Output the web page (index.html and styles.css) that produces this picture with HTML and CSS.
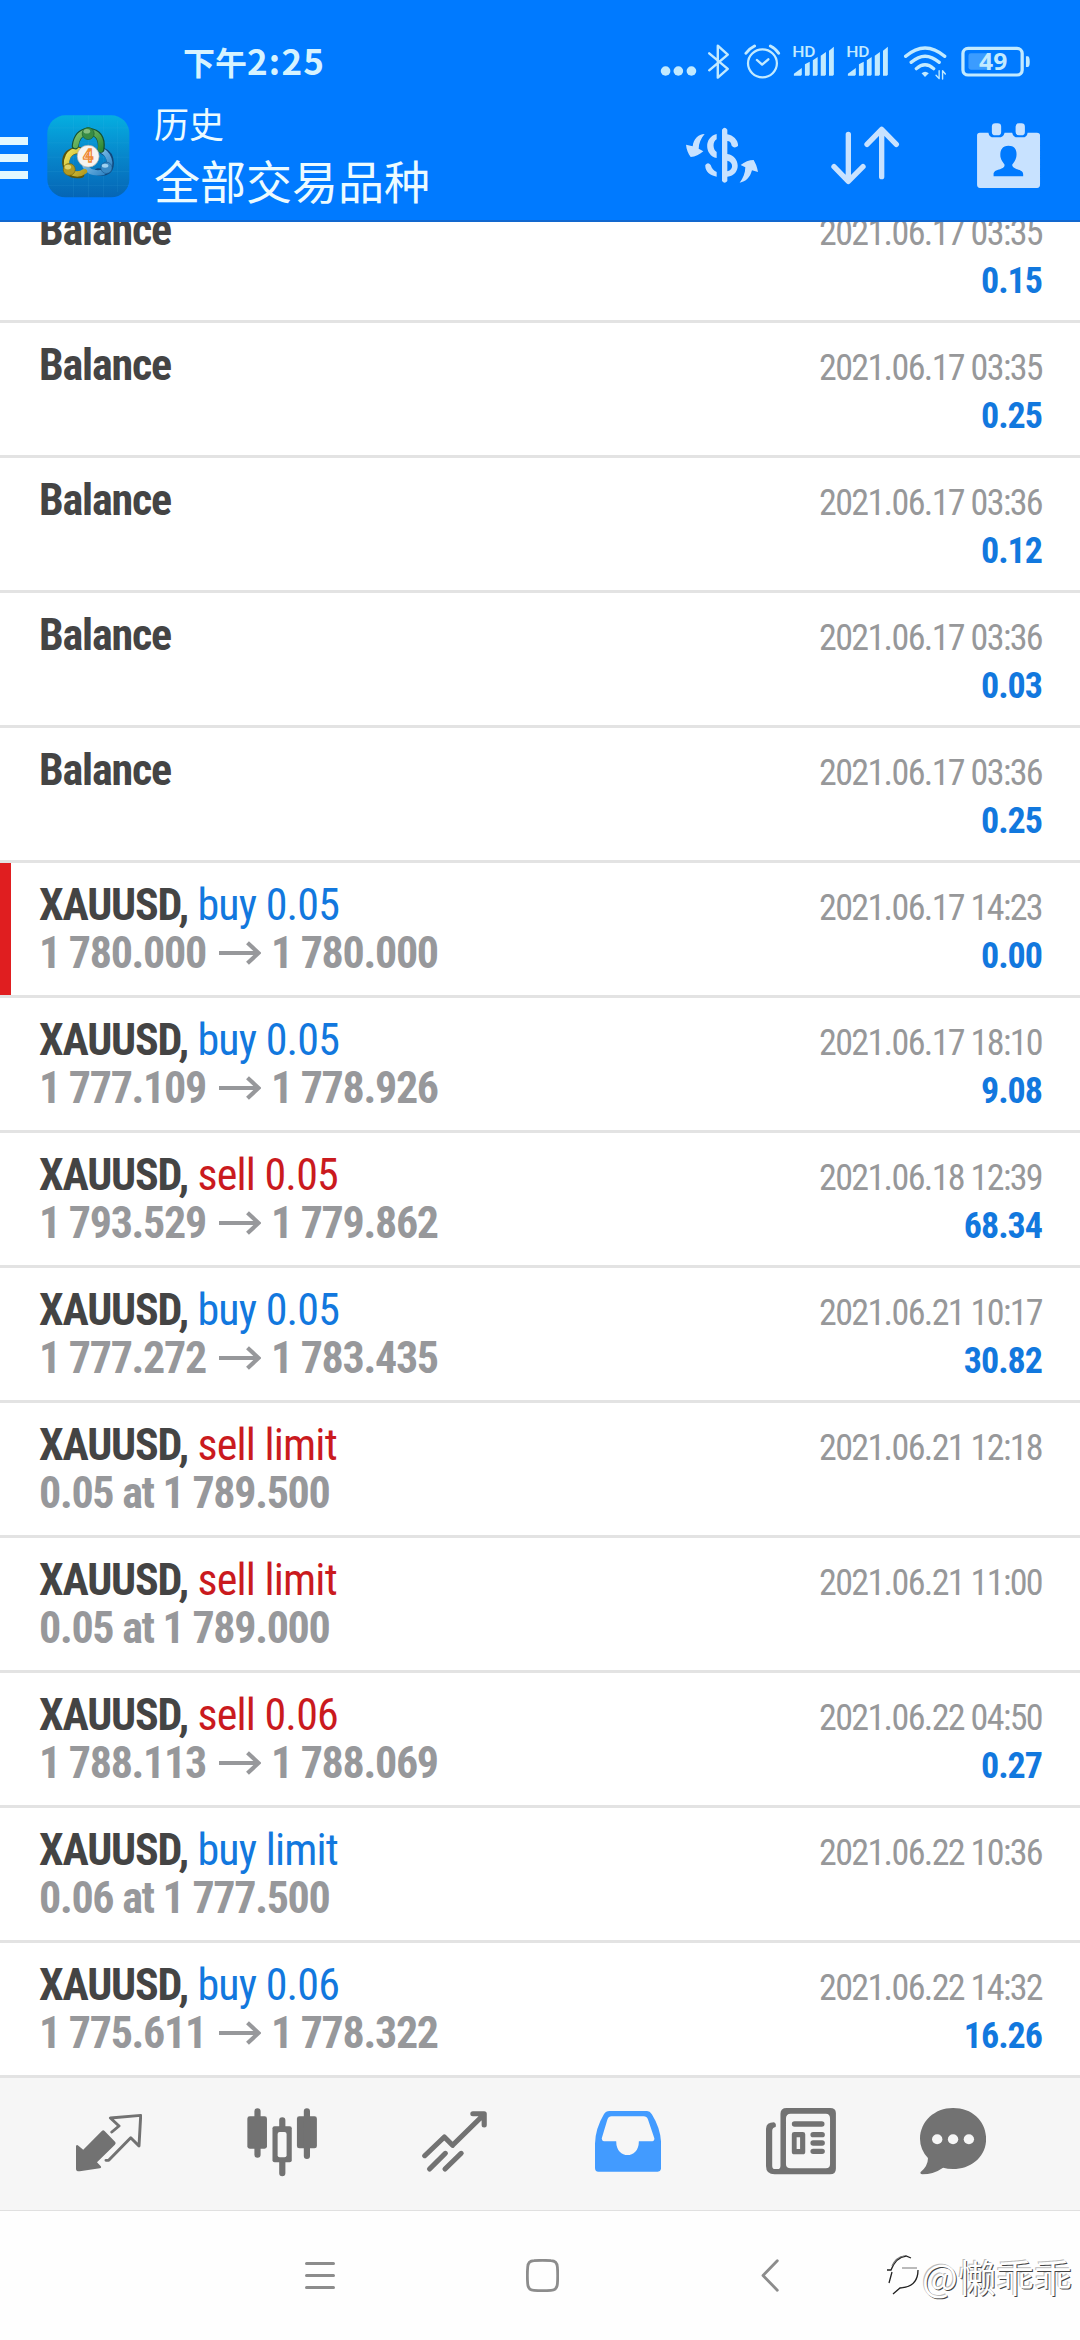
FILE: index.html
```
<!DOCTYPE html>
<html lang="zh-CN">
<head>
<meta charset="utf-8">
<title>历史</title>
<link rel="stylesheet" href="styles.css">
</head>
<body>
<svg class="defs" aria-hidden="true">
  <symbol id="arrow" viewBox="0 0 42 24"><path d="M0 12H39M28.500 1.800L39.500 12L28.500 22.200" fill="none" stroke="currentColor" stroke-width="4.200"/></symbol>
  <symbol id="signal" viewBox="715 130 155 115" preserveAspectRatio="none">
    <text x="730" y="172" font-size="46" textLength="68" lengthAdjust="spacingAndGlyphs" font-weight="500" font-family="Roboto">HD</text>
    <path d="M735 228V222L758 205V225L755 228ZM767 194L781 186V225L778 228H767ZM790 182L804 172V225L801 228H790ZM813 168L828 157V225L825 228H813ZM837 153L851 141V225L848 228H837Z"/>
  </symbol>
</svg>
<div class="phone">
  <header class="header">
    <div class="status">
      <div class="clock"><span class="clock-cjk">下午</span><span class="clock-num">2:25</span></div>
      <div class="status-icons">
        <svg width="44.8" viewBox="340 130 130 115" preserveAspectRatio="none"><circle cx="362" cy="214" r="14"/><circle cx="399" cy="214" r="14"/><circle cx="437" cy="214" r="14"/></svg>
        <svg width="34.4" viewBox="470 130 100 115" preserveAspectRatio="none"><path d="M488 161L542 208L513 234V138L542 165L488 212" class="line" stroke-width="7"/></svg>
        <svg width="49.900" viewBox="570 130 145 115" preserveAspectRatio="none"><circle cx="644" cy="191" r="42" class="line" stroke-width="6.500"/><path d="M628 181L643 195L661 179" class="line" stroke-width="7"/><path d="M596 161Q605 147 621 139M667 139Q683 147 691 161" class="line" stroke-width="8.500"/></svg>
        <svg width="53.4"><use href="#signal"/></svg>
        <svg width="53.4"><use href="#signal"/></svg>
        <svg width="60.300" viewBox="1025 130 175 115" preserveAspectRatio="none"><path d="M1059 170Q1115 120 1172 170M1075 188Q1115 151 1156 188M1090 207Q1115 184 1140 207" class="line" stroke-width="10"/><path d="M1105 221Q1115 211 1126 221L1115 232Z"/><path d="M1156 213V237L1147 227M1166 238V213L1174 223" class="line" stroke-width="4"/></svg>
        <svg width="79.200" viewBox="1200 130 230 115" preserveAspectRatio="none"><rect x="1226" y="146" width="172" height="80" rx="15" class="line" stroke-width="9.500"/><rect x="1242" y="161" width="64" height="49" rx="7" opacity=".3"/><path d="M1409 170H1415Q1420 172 1420 186T1415 202H1409Z"/><text x="1273" y="212" font-size="67" font-weight="700" textLength="82" lengthAdjust="spacingAndGlyphs" font-family="Noto Sans">49</text></svg>
      </div>
    </div>
    <div class="toolbar">
      <div class="burger"><i></i><i></i><i></i></div>
      <svg class="logo" viewBox="50 43 250 250">
        <defs>
          <linearGradient id="sky" x1="0" y1="0" x2="0" y2="1"><stop offset="0" stop-color="#05aee0"/><stop offset=".5" stop-color="#0786cb"/><stop offset="1" stop-color="#0565b5"/></linearGradient>
          <linearGradient id="green" x1="0" y1="0" x2="1" y2="1"><stop offset="0" stop-color="#82c46f"/><stop offset="1" stop-color="#2f8a38"/></linearGradient>
          <linearGradient id="gold" x1="0" y1="0" x2="1" y2="1"><stop offset="0" stop-color="#eee45a"/><stop offset="1" stop-color="#b39a20"/></linearGradient>
          <linearGradient id="blue" x1="0" y1="0" x2="1" y2="1"><stop offset="0" stop-color="#9bd4f5"/><stop offset="1" stop-color="#287fc2"/></linearGradient>
        </defs>
        <rect x="51" y="44" width="247" height="247" rx="54" fill="url(#sky)"/>
        <path d="M130 44V291M175 44V291M220 44V291M262 60V275M51 82H298M51 127H298M51 170H298M51 213H298M51 256H298" stroke="#5cc4ee" stroke-opacity=".2" stroke-width="1.500"/>
        <g stroke-linecap="round" fill="none">
          <path d="M203 214Q240 222 241 188Q240 160 219 152" stroke="#10477c" stroke-width="21"/><path d="M165 198Q180 223 219 216Q241 205 239 186Q236 162 219 152" stroke="url(#blue)" stroke-width="16"/>
          <path d="M152 222Q112 228 106 188Q105 152 145 149" stroke="#59550e" stroke-width="21"/><path d="M163 213Q143 228 119 214Q101 193 114 167Q124 150 145 150" stroke="url(#gold)" stroke-width="16"/>
          <path d="M135 136Q140 96 174 91Q219 97 213 146" stroke="#145232" stroke-width="21"/><path d="M136 135Q141 97 174 92Q219 97 211 147" stroke="url(#green)" stroke-width="16"/>
        </g>
        <circle cx="174" cy="99" r="18" fill="#388c45" stroke="#1b5c2b" stroke-width="2"/><ellipse cx="170" cy="92" rx="10" ry="7" fill="#a4d397" opacity=".7"/>
        <circle cx="117" cy="207" r="18" fill="#b39a22" stroke="#716511" stroke-width="2"/><ellipse cx="113" cy="200" rx="10" ry="7" fill="#f2e989" opacity=".7"/>
        <circle cx="229" cy="202" r="17" fill="#398ac5" stroke="#1a5a92" stroke-width="2"/><ellipse cx="225" cy="196" rx="10" ry="6" fill="#b8e2fa" opacity=".8"/>
        <circle cx="174" cy="167" r="33" fill="#f7f4f1" stroke="#a8aaa2" stroke-width="2"/>
        <text x="174" y="186" text-anchor="middle" font-family="Roboto" font-size="54" font-weight="700" fill="#fff" stroke="#ee8a37" stroke-width="4">4</text>
      </svg>
      <div class="titles"><div class="title-small">历史</div><div class="title-big">全部交易品种</div></div>
      <div class="actions">
        <svg class="ic-money" width="75" height="58.3" viewBox="75 285 225 175"><path d="M134 309C114 310 101 323 98 346L78 341C79 356 85 368 92 378C106 378 118 370 130 361L116 353C116 337 123 322 134 309ZM239 455C258 452 270 440 276 418L294 423C292 410 287 397 281 387C268 387 253 393 242 402L256 409C256 426 249 442 239 455Z"/><path d="M170 309V325C158 331 157 354 170 363V381C134 374 130 319 170 309ZM136 402Q144 392 152 402C156 413 160 419 170 423V437C149 434 134 420 136 402ZM186 296Q194 285 202 296V310C220 313 236 329 234 345Q223 354 215 344C213 334 209 330 202 330V369C242 374 245 434 202 437V450Q194 460 186 450ZM202 389V421C222 415 220 393 202 389Z" fill-rule="evenodd"/></svg>
        <svg class="ic-sort" width="70" height="60" viewBox="510 285 210 180"><path d="M565 313V453M522 410L565 454L609 410M665 440V298M621 343L665 298L709 343" class="line" stroke-width="16"/></svg>
        <svg width="67.1" height="66.7" viewBox="1262 365 195 200" preserveAspectRatio="none"><path d="M1276 397H1301Q1303 411 1317 411H1331Q1345 411 1348 397H1370Q1373 411 1386 411H1400Q1413 411 1415 397H1442Q1451 397 1451 405V553Q1451 563 1441 563H1278Q1268 563 1268 553V405Q1268 397 1276 397ZM1359 436C1339 436 1334 452 1336 470C1338 482 1345 487 1348 493C1348 511 1316 503 1316 522V528H1402V522C1402 504 1371 510 1370 493C1375 486 1380 480 1382 470C1385 450 1379 436 1359 436Z" fill-rule="evenodd"/><rect x="1311" y="369" width="27" height="36" rx="10"/><rect x="1380" y="369" width="27" height="36" rx="10"/></svg>
      </div>
    </div>
  </header>
  <main class="list">
    <div class="scroll">
      <div class="row"><div class="left"><b>Balance</b></div><div class="right"><time>2021.06.17 03:35</time><strong>0.15</strong></div></div>
      <div class="row"><div class="left"><b>Balance</b></div><div class="right"><time>2021.06.17 03:35</time><strong>0.25</strong></div></div>
      <div class="row"><div class="left"><b>Balance</b></div><div class="right"><time>2021.06.17 03:36</time><strong>0.12</strong></div></div>
      <div class="row"><div class="left"><b>Balance</b></div><div class="right"><time>2021.06.17 03:36</time><strong>0.03</strong></div></div>
      <div class="row"><div class="left"><b>Balance</b></div><div class="right"><time>2021.06.17 03:36</time><strong>0.25</strong></div></div>
      <div class="row flagged"><div class="left"><div><b>XAUUSD,</b> <span class="buy">buy 0.05</span></div><div class="price">1 780.000<svg><use href="#arrow"/></svg>1 780.000</div></div><div class="right"><time>2021.06.17 14:23</time><strong>0.00</strong></div></div>
      <div class="row"><div class="left"><div><b>XAUUSD,</b> <span class="buy">buy 0.05</span></div><div class="price">1 777.109<svg><use href="#arrow"/></svg>1 778.926</div></div><div class="right"><time>2021.06.17 18:10</time><strong>9.08</strong></div></div>
      <div class="row"><div class="left"><div><b>XAUUSD,</b> <span class="sell">sell 0.05</span></div><div class="price">1 793.529<svg><use href="#arrow"/></svg>1 779.862</div></div><div class="right"><time>2021.06.18 12:39</time><strong>68.34</strong></div></div>
      <div class="row"><div class="left"><div><b>XAUUSD,</b> <span class="buy">buy 0.05</span></div><div class="price">1 777.272<svg><use href="#arrow"/></svg>1 783.435</div></div><div class="right"><time>2021.06.21 10:17</time><strong>30.82</strong></div></div>
      <div class="row"><div class="left"><div><b>XAUUSD,</b> <span class="sell">sell limit</span></div><div class="price">0.05 at 1 789.500</div></div><div class="right"><time>2021.06.21 12:18</time></div></div>
      <div class="row"><div class="left"><div><b>XAUUSD,</b> <span class="sell">sell limit</span></div><div class="price">0.05 at 1 789.000</div></div><div class="right"><time>2021.06.21 11:00</time></div></div>
      <div class="row"><div class="left"><div><b>XAUUSD,</b> <span class="sell">sell 0.06</span></div><div class="price">1 788.113<svg><use href="#arrow"/></svg>1 788.069</div></div><div class="right"><time>2021.06.22 04:50</time><strong>0.27</strong></div></div>
      <div class="row"><div class="left"><div><b>XAUUSD,</b> <span class="buy">buy limit</span></div><div class="price">0.06 at 1 777.500</div></div><div class="right"><time>2021.06.22 10:36</time></div></div>
      <div class="row"><div class="left"><div><b>XAUUSD,</b> <span class="buy">buy 0.06</span></div><div class="price">1 775.611<svg><use href="#arrow"/></svg>1 778.322</div></div><div class="right"><time>2021.06.22 14:32</time><strong>16.26</strong></div></div>
    </div>
  </main>
  <nav class="tabs">
    <svg width="66.100" viewBox="219 140 192 210" preserveAspectRatio="none"><path d="M219 257Q221 252 226 256L240 268L294 212Q298 208 302 212L333 245Q336 249 332 253L280 306L291 318Q294 323 288 324L230 333Q219 334 219 325Z"/><path d="M323 215L344 197L319 173L407 165L402 257L378 232L314 300H306" class="line" stroke-width="8.500"/></svg>
    <svg width="69.900" viewBox="714 140 203 210" preserveAspectRatio="none"><rect x="715" y="168" width="57" height="97" rx="7"/><rect x="859" y="168" width="58" height="96" rx="7"/><path d="M744.500 153V283M888 153V287M816.500 180V200M816.500 305V339" class="line" stroke-width="18"/><rect x="788" y="198" width="56" height="108" rx="6"/><rect x="803" y="215" width="26" height="76" rx="6" class="hole"/></svg>
    <svg width="65.300" viewBox="1224 140 190 210" preserveAspectRatio="none"><path d="M1232 286L1289 230L1313 255L1399 168M1372 160H1405V194" class="line" stroke-width="15"/><path d="M1246 326L1292 279M1291 326L1338 279" class="line" stroke-width="15"/></svg>
    <svg width="66.100" class="active" viewBox="158 140 193 210" preserveAspectRatio="none"><path d="M200 152H310Q318 152 324 162Q350 205 351 250V323Q351 334 341 334H168Q158 334 158 323V250Q159 205 184 162Q190 152 200 152ZM206 168Q198 168 194 178L178 233Q177 242 184 243H220C219 298 287 298 286 243H326Q333 241 331 233L313 178Q309 168 300 168Z" fill-rule="evenodd"/></svg>
    <svg width="69.900" viewBox="656 140 203 210" preserveAspectRatio="none"><path d="M716 143H842Q859 143 859 158V325Q859 342 842 342H681Q656 342 656 317V205Q657 186 679 186Q687 189 684 200Q674 202 674 212V316Q674 326 682 326H690Q698 326 698 316V160Q698 143 716 143ZM728 160Q714 160 714 174V311Q714 324 728 324H830Q842 324 842 311V174Q842 160 830 160Z" fill-rule="evenodd"/><path d="M739 191H818M793 223H819M793 248H819M793 273H819" class="line" stroke-width="16"/><path d="M738 215H763Q770 215 770 222V274Q770 282 763 282H738Q731 282 731 274V222Q731 215 738 215ZM745 231V266H755V231Z" fill-rule="evenodd"/></svg>
    <svg width="66.100" viewBox="1103 140 192 210" preserveAspectRatio="none"><path d="M1199 143C1257 143 1295 184 1295 236C1295 290 1250 326 1199 326Q1183 326 1170 322Q1143 342 1109 342Q1102 341 1105 335Q1127 315 1126 293Q1103 267 1103 235C1104 183 1145 143 1199 143Z"/><circle cx="1153" cy="237" r="15" class="hole"/><circle cx="1199" cy="237" r="15" class="hole"/><circle cx="1245" cy="237" r="15" class="hole"/></svg>
  </nav>
  <footer class="sysnav">
    <svg class="recent" width="30" height="29" viewBox="0 0 30 29"><path d="M1.500 2.500H28.500M1.500 14.500H28.500M1.500 26.500H28.500" class="line" stroke-width="3"/></svg>
    <svg class="home" width="33" height="33" viewBox="0 0 33 33"><path d="M8 1.700Q16.500 1 25 1.700Q31 2 31.400 8Q32 16.500 31.400 25Q31 31 25 31.400Q16.500 32 8 31.400Q2 31 1.700 25Q1 16.500 1.700 8Q2 2 8 1.700Z" class="line" stroke-width="2.800"/></svg>
    <svg class="back" width="18" height="33" viewBox="0 0 18 33"><path d="M16.300 1.800L2 16.500L16.300 31.200" class="line" stroke-width="2.800"/></svg>
    <div class="mark"><svg width="36" height="50" viewBox="0 0 36 50"><path d="M32 19Q32 36 14 37L7 43M1 19H5Q10 6 20 5L25 7M6 21L3 32" fill="none" stroke="#222" stroke-width="1.300"/><path d="M16 17H31M6 15Q10 6 18 5" fill="none" stroke="#777" stroke-width="1.200"/></svg><span>@懒乖乖</span></div>
  </footer>
</div>
</body>
</html>
```
FILE: styles.css
```
* { box-sizing: border-box; }
body { margin: 0; background: #fff; }
svg { display: block; flex: none; fill: currentColor; }
.defs { position: absolute; width: 0; height: 0; }
.line { fill: none; stroke: currentColor; stroke-linecap: round; stroke-linejoin: round; }

.phone {
  width: 1080px; height: 2340px; overflow: hidden;
  display: flex; flex-direction: column;
  font-family: "Roboto Condensed", "Noto Sans CJK SC", sans-serif;
}

/* Header */
.header { flex: none; height: 222px; background: #007aff; border-bottom: 2px solid #1268cf; }
.status {
  height: 90px; padding: 43px 46.600px 0 183px; color: #c2eaff;
  display: flex; justify-content: space-between;
}
.clock {
  display: flex; align-items: baseline; color: #d6f3ff; white-space: nowrap;
  font-family: "Noto Sans CJK SC", sans-serif; font-weight: 700; line-height: 38px; margin-top: -2px;
}
.clock-cjk { font-size: 32px; }
.clock-num { font-size: 35px; letter-spacing: 1.200px; }
.status-icons { display: flex; }
.status-icons svg { height: 38.300px; }

.toolbar { height: 130px; display: flex; align-items: center; padding-right: 38.300px; }
.burger { width: 28px; display: grid; gap: 9px; margin-top: 5px; }
.burger i { height: 8px; background: #e2f8ff; }
.logo { width: 83px; height: 83px; margin: 2px 0 0 18.500px; }
.titles {
  margin: -5px auto 0 24.500px; color: #ecfbff; white-space: nowrap;
  font-family: "Noto Sans CJK SC", sans-serif; font-weight: 400;
}
.title-small { font-size: 35px; line-height: 52px; }
.title-big { font-size: 46px; line-height: 60px; }
.actions { display: flex; align-items: center; color: #c8e2ff; }
.ic-money { margin-right: 70px; }
.ic-sort { margin-right: 74.600px; }

/* History list */
.list { flex: none; height: 1856px; overflow: hidden; }
.scroll { margin-top: -34px; }
.row {
  height: 135px; padding: 18px 38px 0 39px; border-bottom: 3px solid #e3e3e3; background: #fff;
  display: flex; justify-content: space-between; white-space: nowrap;
}
.flagged { background: linear-gradient(90deg, #e01e20 11px, #fff 11px); }
.left { font-size: 44px; line-height: 48px; letter-spacing: -0.800px; color: #444; }
.left b { font-weight: 700; letter-spacing: -1.200px; }
.buy { color: #1278de; }
.sell { color: #ca1a1e; }
.price { display: flex; align-items: center; font-weight: 700; color: #97989b; letter-spacing: -1.300px; }
.price svg { width: 42px; height: 24px; margin: 0 10px 0 13px; }
.right { display: flex; flex-direction: column; align-items: flex-end; font-size: 36px; line-height: 48px; padding-top: 3px; }
time { color: #97989a; letter-spacing: -1.620px; }
.right strong { color: #1278de; letter-spacing: -1px; font-weight: 700; }

/* Tab bar */
.tabs {
  flex: none; height: 133px; padding: 29px 0 0 22px; background: #f6f6f6; border-bottom: 1px solid #e0e0e0;
  display: grid; grid-template-columns: repeat(5, 173.200px) 130px; justify-items: center; color: #727272;
}
.tabs svg { height: 70px; }
.tabs .active { color: #429bff; }
.hole { fill: #f6f6f6; }

/* System navigation */
.sysnav { flex: 1; display: flex; align-items: center; background: #fefefe; color: #8c8c8c; }
.recent { margin-left: 305px; }
.home { margin-left: 191px; }
.back { margin-left: 202px; }
.mark { margin-left: 107px; display: flex; align-items: center; }
.mark span {
  font-family: "Noto Sans CJK SC", sans-serif; font-size: 38px; line-height: 50px; color: #fff;
  text-shadow: 1px 1px 0 #444, -1px -1px 0 #bbb; white-space: nowrap;
}
```
